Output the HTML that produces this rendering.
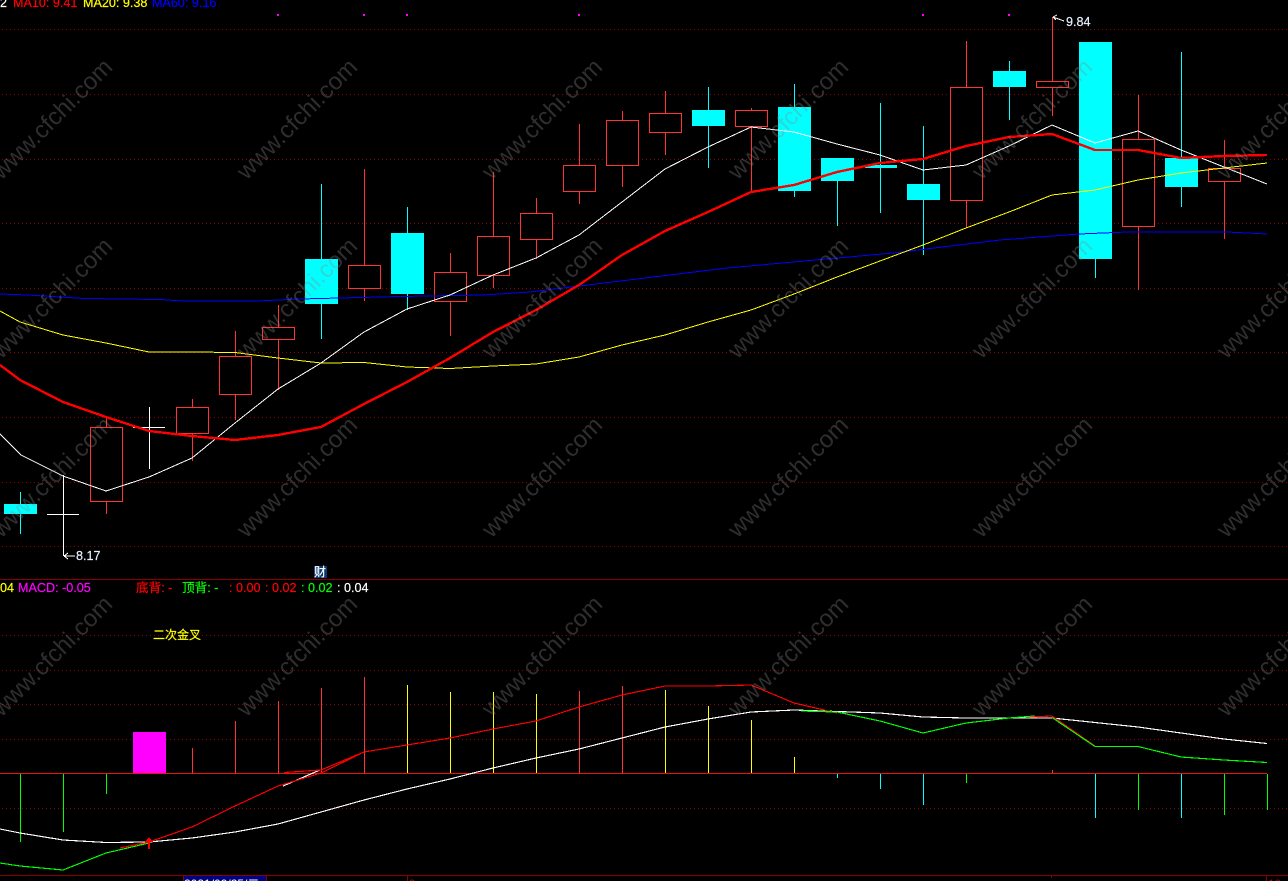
<!DOCTYPE html>
<html><head><meta charset="utf-8"><style>
html,body{margin:0;padding:0;background:#000;width:1288px;height:881px;overflow:hidden}
svg{display:block}
text{font-family:"Liberation Sans","Noto Sans CJK SC",sans-serif;font-size:12.6px}
.t text{stroke-width:.2px;stroke:currentColor}
.w text{font-size:24px}
</style></head><body>
<svg width="1288" height="881" viewBox="0 0 1288 881" xmlns="http://www.w3.org/2000/svg">
<rect width="1288" height="881" fill="#000"/>
<g stroke="#900000" stroke-width="1" stroke-dasharray="1 3" shape-rendering="crispEdges">
<path d="M2 29.5H1288M2 94.5H1288M2 159.5H1288M2 223.5H1288M2 288.5H1288M2 352.5H1288M2 417.5H1288M2 482.5H1288M2 546.5H1288M2 635.5H1288M2 670.5H1288M2 704.5H1288M2 739.5H1288M2 808.5H1288"/>
</g>
<g stroke="#8a0000" shape-rendering="crispEdges" fill="none">
<path d="M0 579.5H1288M0 875.5H1288M407.5 875V881M1266.5 875V881M183.5 875V881M266.5 875V881M1051.5 875V878"/>
</g>
<g fill="#f0f" shape-rendering="crispEdges">
<rect x="277" y="14" width="2" height="2"/><rect x="363" y="14" width="2" height="2"/><rect x="406" y="14" width="2" height="2"/><rect x="578" y="14" width="2" height="2"/><rect x="922" y="14" width="2" height="2"/><rect x="1008" y="14" width="2" height="2"/>
</g>
<!-- wicks -->
<g stroke="#0ff" shape-rendering="crispEdges">
<path d="M20.5 492V534M321.5 184V339M407.5 207V310M708.5 87V168M794.5 84V197M837.5 158V226M880.5 103V213M923.5 126V255M1009.5 61V120M1095.5 42V278M1181.5 52V207"/>
</g>
<g stroke="#f33" shape-rendering="crispEdges">
<path d="M106.5 417V514M192.5 399V461M235.5 331V420M278.5 305V390M364.5 169V301M450.5 253V336M493.5 172V288M536.5 198V259M579.5 124V204M622.5 111V187M665.5 91V155M751.5 108V192M966.5 41V228M1052.5 17V116M1138.5 95V290M1224.5 140V239"/>
</g>
<g stroke="#fff" shape-rendering="crispEdges">
<path d="M63.5 475V556M47 514.5H79M149.5 407V469M133 427.5H165"/>
</g>
<!-- bodies -->
<g fill="#0ff" shape-rendering="crispEdges">
<rect x="4" y="504" width="33" height="10"/><rect x="305" y="259" width="33" height="45"/><rect x="391" y="233" width="33" height="61"/><rect x="692" y="110" width="33" height="16"/><rect x="778" y="107" width="33" height="84"/><rect x="821" y="158" width="33" height="23"/><rect x="865" y="165" width="32" height="3"/><rect x="907" y="184" width="33" height="16"/><rect x="993" y="71" width="33" height="16"/><rect x="1079" y="42" width="33" height="217"/><rect x="1165" y="158" width="33" height="29"/>
</g>
<g fill="#000" stroke="#f33" shape-rendering="crispEdges">
<rect x="90.5" y="427.5" width="32" height="74"/><rect x="176.5" y="407.5" width="32" height="26"/><rect x="219.5" y="356.5" width="32" height="38"/><rect x="262.5" y="327.5" width="32" height="12"/><rect x="348.5" y="265.5" width="32" height="23"/><rect x="434.5" y="272.5" width="32" height="29"/><rect x="477.5" y="236.5" width="32" height="39"/><rect x="520.5" y="213.5" width="32" height="26"/><rect x="563.5" y="165.5" width="32" height="26"/><rect x="606.5" y="120.5" width="32" height="45"/><rect x="649.5" y="113.5" width="32" height="19"/><rect x="735.5" y="110.5" width="32" height="16"/><rect x="950.5" y="87.5" width="32" height="113"/><rect x="1036.5" y="81.5" width="32" height="6"/><rect x="1122.5" y="139.5" width="32" height="87"/><rect x="1208.5" y="168.5" width="32" height="13"/>
</g>
<!-- MAs -->
<g fill="none" shape-rendering="crispEdges">
<polyline stroke="#00f" stroke-width="1" points="0,294 28,295 85,298.5 160,299.5 182,301 257,301 300,299 400,296.5 483,295 530,292 600,283.5 727,268 893,253 1000,240 1079,234 1127,232 1227,232 1267,234"/>
<polyline stroke="#ff0" stroke-width="1" points="0,311 20,322 63,335 106,343 149,352 192,352 235,352.5 278,358 321,363 364,362.5 407,367 450,368.5 493,366 536,364 579,357 622,345 665,335 708,322 751,310 794,294 837,277 880,261 923,245 966,228 1009,212 1052,195 1095,190 1138,180 1181,173 1224,168 1267,163"/>
<polyline stroke="#fff" stroke-width="1" points="0,434 21,455 63,476 106,491 149,477 192,458 235,423 278,389 321,363 364,332 407,309 450,295 493,275 536,258 579,235 622,202 665,169 708,147 751,127 794,132 837,144 880,155 923,170 966,165 1009,146 1052,125 1095,143 1138,131 1181,150 1224,167 1267,184"/>
<polyline stroke="#f00" stroke-width="2.4" points="0,365 20,380 63,402 106,417 149,431 192,436 235,440 278,435 321,427 364,404 407,382 450,358 493,332 536,310 579,285 622,255 665,231 708,212 751,192 794,185 837,172 880,163 923,159 966,146 1009,137 1052,134 1095,150 1138,150 1181,158 1224,156 1267,155"/>
</g>
<!-- high/low labels -->
<g stroke="#fff" fill="none" stroke-width="1">
<path d="M64 556H75M64 556L68 553M64 556L68 559" shape-rendering="crispEdges"/>
<path d="M1053 17L1064 21M1053 17L1057 15M1053 17L1056 20" shape-rendering="crispEdges"/>
</g>
<g class="t">
<text x="76" y="560" fill="#e8f0ff" color="#e8f0ff">8.17</text>
<text x="1066" y="26" fill="#e8f0ff" color="#e8f0ff">9.84</text>
<!-- header text -->
<text x="0" y="7" fill="#fff" color="#fff">2</text>
<text x="13" y="7" fill="#f00" color="#f00">MA10: 9.41</text>
<text x="83" y="7" fill="#ff0" color="#ff0">MA20: 9.38</text>
<text x="152" y="7" fill="#00f" color="#00f">MA60: 9.16</text>
<rect x="314" y="566" width="13" height="12" fill="#0a3a6e"/>
<text x="314" y="576" fill="#fff" color="#fff" style="font-size:12px">财</text>
<text x="0" y="592" fill="#ff0" color="#ff0">04</text>
<text x="18" y="592" fill="#f0f" color="#f0f">MACD: -0.05</text>
<text x="136" y="592" fill="#f00" color="#f00">底背: -</text>
<text x="182" y="592" fill="#0f0" color="#0f0">顶背: -</text>
<text x="229" y="592" fill="#f00" color="#f00">: 0.00</text>
<text x="265" y="592" fill="#f00" color="#f00">: 0.02</text>
<text x="301" y="592" fill="#0f0" color="#0f0">: 0.02</text>
<text x="337" y="592" fill="#fff" color="#fff">: 0.04</text>
<text x="153" y="639" fill="#ff0" color="#ff0" style="font-size:12px">二次金叉</text>
</g>
<!-- histogram -->
<rect x="133" y="732" width="33" height="41" fill="#f0f" shape-rendering="crispEdges"/>
<g stroke="#f33" shape-rendering="crispEdges"><path d="M192.5 748V773M235.5 721V773M278.5 701V773M321.5 688V773M364.5 677V773M579.5 691V773M622.5 686V773M1052.5 770V773"/></g>
<g stroke="#ff0" shape-rendering="crispEdges"><path d="M407.5 685V773M450.5 692V773M493.5 692V773M536.5 694V773M665.5 690V773M708.5 706V773M751.5 720V773M794.5 757V773"/></g>
<g stroke="#0f0" shape-rendering="crispEdges"><path d="M20.5 774V842M63.5 774V832M106.5 774V794M966.5 774V783M1138.5 774V810M1224.5 774V815M1267.5 774V810"/></g>
<g stroke="#0ff" shape-rendering="crispEdges"><path d="M837.5 774V778M880.5 774V789M923.5 774V805M1095.5 774V818M1181.5 774V818"/></g>
<path d="M0 773.5H1267" stroke="#f01010" shape-rendering="crispEdges"/>
<!-- MACD lines -->
<g fill="none" shape-rendering="crispEdges" stroke-width="1.15">
<polyline stroke="#fff" points="0,829 20,833 63,840 106,842.5 149,842 192,838 235,832 278,824 321,812 364,800 407,789 450,779 493,768 536,758 579,749 622,738 665,727 708,719 751,712 794,710 837,711.5 880,713 923,717 966,718 1009,718 1052,718 1095,722.5 1138,727 1181,733 1224,739 1267,743.5"/>
<polyline stroke="#fff" points="283,786 320,770"/>
<polyline stroke="#0f0" points="0,863 20,866 63,870 106,853 149,843"/>
<polyline stroke="#f00" points="120,848 149,842 192,827 235,806 278,786 321,773 364,752 407,745 450,738 493,729 536,721 579,707 622,695 665,686 708,686 751,685 794,703 837,713"/>
<polyline stroke="#f00" points="284,772.5 321,770 364,752"/>
<polyline stroke="#0f0" points="801,711 837,712 880,721 923,733 966,723 1009,718 1035,716"/>
<polyline stroke="#f00" points="1030,717 1052,716 1095,746"/>
<polyline stroke="#0f0" points="1052,717.5 1095,746.5 1138,746.5 1181,757 1224,760 1267,762.5"/>
</g>
<path d="M149 837L145 842H153Z" fill="#f00" shape-rendering="crispEdges"/>
<path d="M149 842V849" stroke="#f00" stroke-width="2" shape-rendering="crispEdges"/>
<!-- date box -->
<rect x="184" y="876" width="82" height="5" fill="#000080" shape-rendering="crispEdges"/>
<text x="184" y="888" fill="#fff" style="font-size:12px">2021/09/25/二</text>
<text x="409" y="888" fill="#c00000" style="font-size:12px">9</text>
<text x="1268" y="888" fill="#c00000" style="font-size:12px">10</text>
<!-- watermark -->
<g class="w" fill="#8a8a8a" opacity="0.34" text-anchor="middle">
<text transform="translate(52,119) rotate(-45)" y="8">www.cfchi.com</text>
<text transform="translate(297,119) rotate(-45)" y="8">www.cfchi.com</text>
<text transform="translate(542,119) rotate(-45)" y="8">www.cfchi.com</text>
<text transform="translate(788,119) rotate(-45)" y="8">www.cfchi.com</text>
<text transform="translate(1032,119) rotate(-45)" y="8">www.cfchi.com</text>
<text transform="translate(1277,119) rotate(-45)" y="8">www.cfchi.com</text>
<text transform="translate(52,298) rotate(-45)" y="8">www.cfchi.com</text>
<text transform="translate(297,298) rotate(-45)" y="8">www.cfchi.com</text>
<text transform="translate(542,298) rotate(-45)" y="8">www.cfchi.com</text>
<text transform="translate(788,298) rotate(-45)" y="8">www.cfchi.com</text>
<text transform="translate(1032,298) rotate(-45)" y="8">www.cfchi.com</text>
<text transform="translate(1277,298) rotate(-45)" y="8">www.cfchi.com</text>
<text transform="translate(52,477) rotate(-45)" y="8">www.cfchi.com</text>
<text transform="translate(297,477) rotate(-45)" y="8">www.cfchi.com</text>
<text transform="translate(542,477) rotate(-45)" y="8">www.cfchi.com</text>
<text transform="translate(788,477) rotate(-45)" y="8">www.cfchi.com</text>
<text transform="translate(1032,477) rotate(-45)" y="8">www.cfchi.com</text>
<text transform="translate(1277,477) rotate(-45)" y="8">www.cfchi.com</text>
<text transform="translate(52,656) rotate(-45)" y="8">www.cfchi.com</text>
<text transform="translate(297,656) rotate(-45)" y="8">www.cfchi.com</text>
<text transform="translate(542,656) rotate(-45)" y="8">www.cfchi.com</text>
<text transform="translate(788,656) rotate(-45)" y="8">www.cfchi.com</text>
<text transform="translate(1032,656) rotate(-45)" y="8">www.cfchi.com</text>
<text transform="translate(1277,656) rotate(-45)" y="8">www.cfchi.com</text>
</g>
</svg>
</body></html>
